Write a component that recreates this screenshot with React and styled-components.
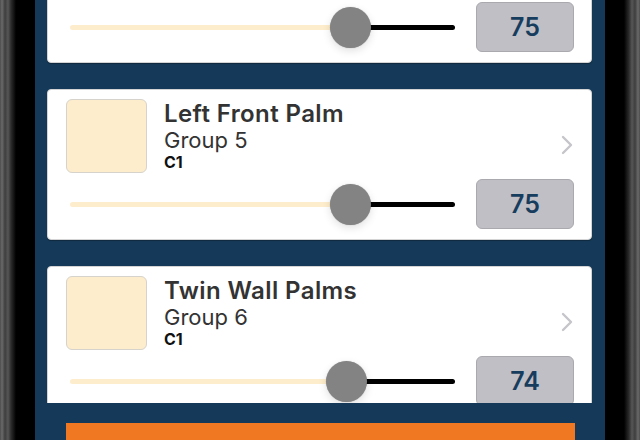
import React from 'react';
import styled, {createGlobalStyle} from 'styled-components';

const zones = [
  {name: 'Right Front Palm', group: 'Group 4', channel: 'C1', value: 75},
  {name: 'Left Front Palm', group: 'Group 5', channel: 'C1', value: 75},
  {name: 'Twin Wall Palms', group: 'Group 6', channel: 'C1', value: 74},
];

const App = () => {
  return (
    <>
      <GlobalStyle />
      <Phone>
        <Bezel side="left" />
        <Screen>
          <ScrollArea>
            <ZoneList>
              {zones.map((zone) => (
                <ZoneCard key={zone.group}>
                  <TopRow>
                    <Swatch />
                    <ZoneInfo>
                      <ZoneName>{zone.name}</ZoneName>
                      <ZoneGroup>{zone.group}</ZoneGroup>
                      <ZoneChannel>{zone.channel}</ZoneChannel>
                    </ZoneInfo>
                    <Chevron width="12" height="20" viewBox="0 0 12 20">
                      <polyline points="2,2 10,10 2,18" fill="none" stroke="#c5c5ca" strokeWidth="2.4" strokeLinecap="round" strokeLinejoin="round" />
                    </Chevron>
                  </TopRow>
                  <BottomRow>
                    <Slider>
                      <TrackPart filled style={{flexGrow: zone.value}} />
                      <Thumb />
                      <TrackPart style={{flexGrow: 100 - zone.value}} />
                    </Slider>
                    <ValueBox>{zone.value}</ValueBox>
                  </BottomRow>
                </ZoneCard>
              ))}
            </ZoneList>
          </ScrollArea>
          <Footer>
            <SaveButton>Save</SaveButton>
          </Footer>
        </Screen>
        <Bezel side="right" />
      </Phone>
    </>
  );
};

export default App;

const GlobalStyle = createGlobalStyle`
  html, body {
    margin: 0;
    padding: 0;
    overflow: hidden;
    background: #000;
  }
  * {
    box-sizing: border-box;
  }
`
const Phone = styled.div`
  display: flex;
  width: 640px;
  height: 440px;
  background: #000;
  font-family: Inter, "Liberation Sans", sans-serif;
`
const Bezel = styled.div`
  width: 35px;
  flex-shrink: 0;
  background: linear-gradient(
    ${({side}) => (side === 'left' ? 'to right' : 'to left')},
    #4c4c4c 0,
    #6a6a6a 2px,
    #3e3e3e 5px,
    #575757 8px,
    #2c2c2c 11px,
    #121212 14px,
    #000 16px,
    #000 100%
  );
`
const Screen = styled.div`
  flex: 1;
  display: flex;
  flex-direction: column;
  background: #153a59;
  overflow: hidden;
`
const ScrollArea = styled.div`
  height: 403px;
  flex-shrink: 0;
  overflow: hidden;
  padding: 0 13px 0 12px;
`
const ZoneList = styled.div`
  display: flex;
  flex-direction: column;
  gap: 26px;
  margin-top: -88px;
`
const ZoneCard = styled.div`
  height: 151px;
  flex-shrink: 0;
  display: flex;
  flex-direction: column;
  gap: 6px;
  padding: 9px 17px 9px 18px;
  background: #fff;
  border: 1px solid #d4d4d4;
  border-radius: 4px;
  box-shadow: 0 1px 1px rgba(0, 0, 0, 0.3);
`
const TopRow = styled.div`
  display: flex;
  align-items: flex-start;
  height: 74px;
`
const Swatch = styled.div`
  width: 81px;
  height: 74px;
  flex-shrink: 0;
  background: #feedcc;
  border: 1px solid #d6d3cc;
  border-radius: 6px;
`
const ZoneInfo = styled.div`
  flex: 1;
  display: flex;
  flex-direction: column;
  padding-left: 17px;
  padding-top: 2px;
`
const ZoneName = styled.div`
  font-size: 24px;
  font-weight: 600;
  letter-spacing: 0.4px;
  line-height: 26px;
  color: #333;
`
const ZoneGroup = styled.div`
  font-size: 22px;
  font-weight: 400;
  line-height: 26px;
  color: #333;
`
const ZoneChannel = styled.div`
  font-size: 16px;
  font-weight: 700;
  line-height: 18px;
  color: #111;
`
const Chevron = styled.svg`
  align-self: center;
  margin-top: 18px;
  margin-right: 1px;
  flex-shrink: 0;
`
const BottomRow = styled.div`
  display: flex;
  align-items: center;
  gap: 21px;
  height: 50px;
`
const Slider = styled.div`
  flex: 1;
  display: flex;
  align-items: center;
  margin-left: 4px;
  height: 42px;
`
const TrackPart = styled.div`
  flex-basis: 0;
  height: 5px;
  background: ${({filled}) => (filled ? '#feedcc' : '#000')};
  border-radius: ${({filled}) => (filled ? '3px 0 0 3px' : '0 3px 3px 0')};
  margin: ${({filled}) => (filled ? '0 -4px 0 0' : '0 0 0 -4px')};
`
const Thumb = styled.div`
  width: 41px;
  height: 41px;
  flex-shrink: 0;
  border-radius: 50%;
  background: #838383;
  position: relative;
  z-index: 1;
  box-shadow: 0 3px 9px rgba(0, 0, 0, 0.12), 0 0 1px rgba(0, 0, 0, 0.3);
`
const ValueBox = styled.div`
  width: 98px;
  height: 50px;
  flex-shrink: 0;
  display: flex;
  align-items: center;
  justify-content: center;
  background: #c0bfc5;
  border: 1px solid #a9a9ae;
  border-radius: 6px;
  font-size: 25px;
  font-weight: 600;
  color: #173d5e;
`
const Footer = styled.div`
  padding: 20px 30px 0 31px;
`
const SaveButton = styled.div`
  height: 50px;
  background: #f07823;
  color: #fff;
  font-size: 20px;
  font-weight: 600;
  display: flex;
  align-items: center;
  justify-content: center;
`
